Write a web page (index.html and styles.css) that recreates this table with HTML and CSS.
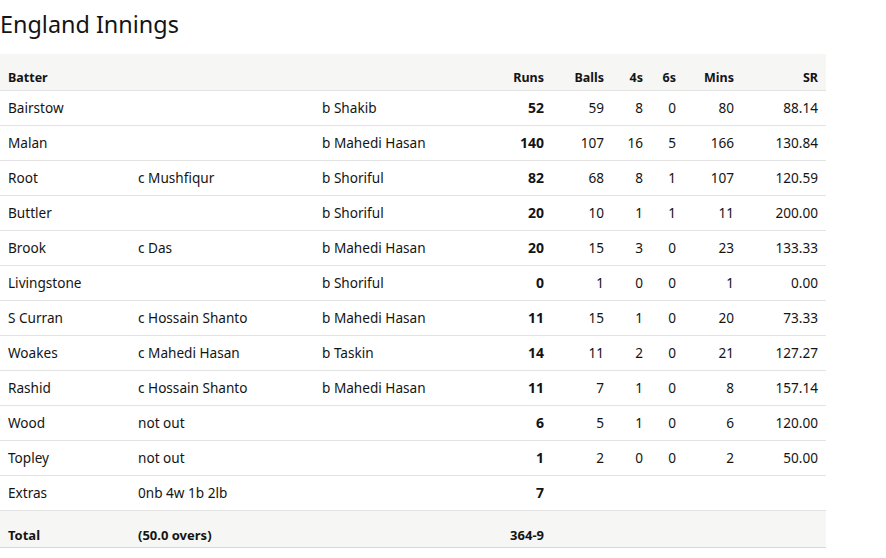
FILE: index.html
```html
<!DOCTYPE html>
<html lang="en">
<head>
<meta charset="utf-8">
<title>England Innings</title>
<link rel="stylesheet" href="styles.css">
</head>
<body>
<h2 class="title">England Innings</h2>
<table class="card">
  <colgroup>
    <col class="c-name"><col class="c-how"><col class="c-bowl"><col class="c-runs"><col class="c-balls"><col class="c-4s"><col class="c-6s"><col class="c-mins"><col class="c-sr">
  </colgroup>
  <thead>
    <tr class="head">
      <th class="l">Batter</th><th class="l"></th><th class="l"></th>
      <th>Runs</th><th>Balls</th><th>4s</th><th>6s</th><th>Mins</th><th>SR</th>
    </tr>
  </thead>
  <tbody>
    <tr><td class="l">Bairstow</td><td class="l"></td><td class="l">b Shakib</td><td class="runs">52</td><td>59</td><td>8</td><td>0</td><td>80</td><td>88.14</td></tr>
    <tr><td class="l">Malan</td><td class="l"></td><td class="l">b Mahedi Hasan</td><td class="runs">140</td><td>107</td><td>16</td><td>5</td><td>166</td><td>130.84</td></tr>
    <tr><td class="l">Root</td><td class="l">c Mushfiqur</td><td class="l">b Shoriful</td><td class="runs">82</td><td>68</td><td>8</td><td>1</td><td>107</td><td>120.59</td></tr>
    <tr><td class="l">Buttler</td><td class="l"></td><td class="l">b Shoriful</td><td class="runs">20</td><td>10</td><td>1</td><td>1</td><td>11</td><td>200.00</td></tr>
    <tr><td class="l">Brook</td><td class="l">c Das</td><td class="l">b Mahedi Hasan</td><td class="runs">20</td><td>15</td><td>3</td><td>0</td><td>23</td><td>133.33</td></tr>
    <tr><td class="l">Livingstone</td><td class="l"></td><td class="l">b Shoriful</td><td class="runs">0</td><td>1</td><td>0</td><td>0</td><td>1</td><td>0.00</td></tr>
    <tr><td class="l">S Curran</td><td class="l">c Hossain Shanto</td><td class="l">b Mahedi Hasan</td><td class="runs">11</td><td>15</td><td>1</td><td>0</td><td>20</td><td>73.33</td></tr>
    <tr><td class="l">Woakes</td><td class="l">c Mahedi Hasan</td><td class="l">b Taskin</td><td class="runs">14</td><td>11</td><td>2</td><td>0</td><td>21</td><td>127.27</td></tr>
    <tr><td class="l">Rashid</td><td class="l">c Hossain Shanto</td><td class="l">b Mahedi Hasan</td><td class="runs">11</td><td>7</td><td>1</td><td>0</td><td>8</td><td>157.14</td></tr>
    <tr><td class="l">Wood</td><td class="l">not out</td><td class="l"></td><td class="runs">6</td><td>5</td><td>1</td><td>0</td><td>6</td><td>120.00</td></tr>
    <tr><td class="l">Topley</td><td class="l">not out</td><td class="l"></td><td class="runs">1</td><td>2</td><td>0</td><td>0</td><td>2</td><td>50.00</td></tr>
    <tr><td class="l">Extras</td><td class="l">0nb 4w 1b 2lb</td><td class="l"></td><td class="runs">7</td><td></td><td></td><td></td><td></td><td></td></tr>
  </tbody>
  <tfoot>
    <tr class="total">
      <td class="l">Total</td><td class="l">(50.0 overs)</td><td class="l"></td><td>364-9</td><td></td><td></td><td></td><td></td><td></td>
    </tr>
  </tfoot>
</table>
</body>
</html>
```
FILE: styles.css
```css
html, body {
  margin: 0;
  padding: 0;
  background: #ffffff;
}
body {
  font-family: "Noto Sans", "Open Sans", sans-serif;
  color: #141414;
}
.title {
  margin: 0;
  padding: 8px 0 0 0;
  height: 46px;
  font-size: 23.4px;
  font-weight: 400;
  line-height: 32px;
}
.card {
  width: 826px;
  table-layout: fixed;
  border-collapse: collapse;
  font-size: 13.6px;
}
.c-name { width: 130px; }
.c-how { width: 184px; }
.c-bowl { width: 178px; }
.c-runs { width: 60px; }
.c-balls { width: 60px; }
.c-4s { width: 39px; }
.c-6s { width: 33px; }
.c-mins { width: 58px; }
.c-sr { width: 84px; }
th, td {
  box-sizing: border-box;
  padding: 0 8px;
  text-align: right;
  white-space: nowrap;
  border-bottom: 1px solid #e3e3e3;
}
.l { text-align: left; }
.head th {
  background: #f6f6f4;
  font-size: 12.5px;
  font-weight: 700;
  height: 36px;
  padding-top: 12px;
  line-height: 24px;
  vertical-align: middle;
}
tbody td {
  height: 35px;
  line-height: 20px;
  vertical-align: middle;
}
.runs {
  font-weight: 700;
  font-size: 14px;
}
.total td {
  background: #f6f6f4;
  font-size: 13px;
  font-weight: 700;
  height: 37px;
  padding-top: 12px;
  line-height: 24px;
  border-bottom: 1px solid #d8d8d8;
}
```
